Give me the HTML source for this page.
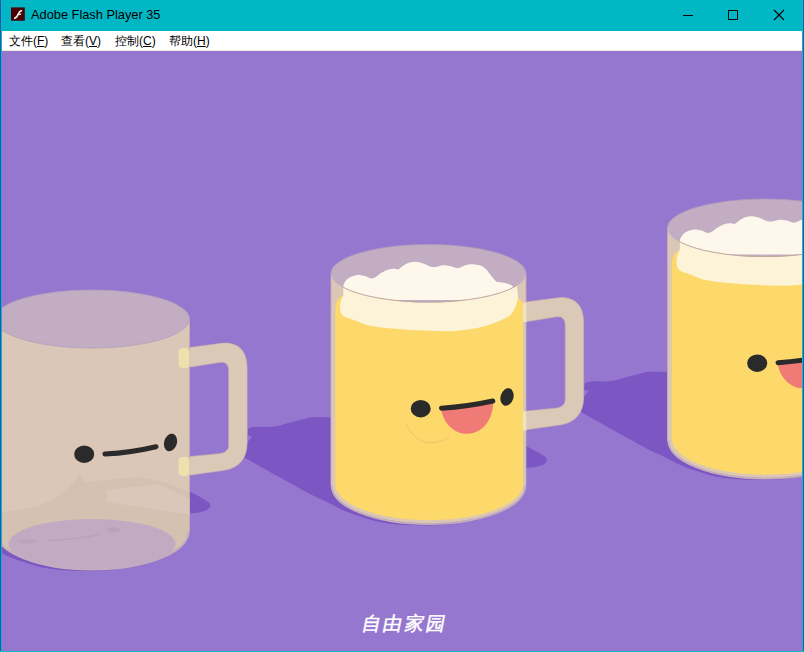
<!DOCTYPE html>
<html><head><meta charset="utf-8">
<style>
html,body{margin:0;padding:0;width:804px;height:652px;overflow:hidden;background:#0a6fb0;}
body{position:relative;font-family:"Liberation Sans",sans-serif;}
#title{position:absolute;left:0;top:0;width:804px;height:31px;background:#01b7c6;}
#ttext{position:absolute;left:31px;top:8px;font-size:12.8px;color:#000;white-space:nowrap;line-height:14px;}
#menu{position:absolute;left:2px;top:31px;width:800px;height:19px;background:#fff;}
#sep{position:absolute;left:2px;top:50px;width:800px;height:1px;background:#ebe8e4;}
.mi{position:absolute;top:3px;margin-left:-1px;font-size:12px;line-height:14px;color:#000;white-space:nowrap;}
.mi u{text-decoration:underline;}
#stage{position:absolute;left:0;top:0;}
#lb{position:absolute;left:0;top:0;width:1px;height:652px;background:#1f55b0;}
#lb2{position:absolute;left:1px;top:0;width:1px;height:652px;background:#0fb6c8;}
#rb{position:absolute;left:802px;top:0;width:1px;height:652px;background:#0fb6c8;}
#rb2{position:absolute;left:803px;top:0;width:1px;height:652px;background:#1d5da8;}
#bb{position:absolute;left:0;top:651px;width:804px;height:1px;background:#14b8c6;}
#cap{position:absolute;left:360px;top:612px;font-size:19px;line-height:24px;color:#fff;white-space:nowrap;letter-spacing:2.3px;transform:skewX(-11deg);transform-origin:0 100%;-webkit-text-stroke:0.5px #fff;}
</style></head>
<body>
<div id="title">
  <svg style="position:absolute;left:11px;top:7px" width="14" height="14" viewBox="0 0 14 14">
    <rect x="0" y="0.4" width="13.8" height="13.3" fill="#4a0204"/>
    <path d="M3.6,11.2 C5.6,10.8 6.4,9.2 7.3,7.1 C8.2,4.9 8.7,3.9 10.5,3.8" stroke="#fff" stroke-width="1.5" fill="none" stroke-linecap="round"/>
    <path d="M7.4,7.4 L9.6,7.1" stroke="#fff" stroke-width="1.4" fill="none" stroke-linecap="round"/>
  </svg>
  <div id="ttext">Adobe Flash Player 35</div>
  <svg style="position:absolute;left:670px;top:0" width="134" height="31" viewBox="0 0 134 31">
    <rect x="13" y="15" width="10" height="1" fill="#000"/>
    <rect x="58.5" y="10.5" width="9" height="9" fill="none" stroke="#000" stroke-width="1"/>
    <path d="M104,10 L114,20 M114,10 L104,20" stroke="#000" stroke-width="1.1" fill="none"/>
  </svg>
</div>
<div id="menu">
  <div class="mi" style="left:8px">文件(<u>F</u>)</div>
  <div class="mi" style="left:60px">查看(<u>V</u>)</div>
  <div class="mi" style="left:114px">控制(<u>C</u>)</div>
  <div class="mi" style="left:168px">帮助(<u>H</u>)</div>
</div>
<div id="sep"></div>

<svg id="stage" width="804" height="652" viewBox="0 0 804 652">
  <defs>
    <clipPath id="content"><rect x="2" y="51" width="800" height="600"/></clipPath>
    <clipPath id="topell"><ellipse cx="428.5" cy="273.5" rx="97.5" ry="29"/></clipPath>
    <!-- shadow cast upper-left + tip under handle -->
    <g id="shadow">
      <path d="M248.3,428.5 C252,427 256,426.6 260,426.7 C266,427 270,427 275,426.5 C282,425 286,423.5 292,422 C298,421 304,419 309,417.6 C315,417 322,417.2 330,417.5 L430,417 L430,525.5 L425.9,525.5 C422.5,525.4 412.3,525.5 405.5,525.1 C398.7,524.7 391.9,524.3 385.1,523.1 C378.3,521.9 371.5,519.9 364.7,517.9 C357.9,515.9 351.1,513.7 344.3,510.8 C337.5,507.9 330.7,504.0 323.9,500.6 C317.1,497.2 316.8,497.6 303.5,490.4 C290.2,483.2 253.9,462.8 244.0,457.3 L243,456 L247.4,442.3 L252,436.8 L247.4,435 Z" fill="#7c57c3"/>
      <path d="M331,484.2 A97.5,39.4 0 0 0 526,484.2 Z" fill="#7c57c3" transform="translate(-1.5,2)"/>
      <path d="M526,446 C534,450 542,454 546,457.5 C548,460 546,463 542.6,465 C537,467 531,467.8 526,467.8 Z" fill="#7c57c3"/>
    </g>
    <g id="handle">
      <path fill-rule="evenodd" fill="#dbc9b8" stroke="#c9b4ad" stroke-width="0.6" d="M524,302.3 L558,297.8 C574,296 583.6,305 583.6,322 L583.6,398 C583.6,412 576,422.5 561,424.8 L524,430 Z M524,322 L556.6,316.8 C562,316 565.2,319 565.2,325 L565.2,400 C565.2,404.5 562,407.4 555.4,408.2 L524,411.3 Z"/>
    </g>
    <g id="body">
      <path d="M331,273.3 L331,484.2 A97.5,39.4 0 0 0 526,484.2 L526,273.3 Z" fill="#dac7b7" stroke="#c5b0ab" stroke-width="0.8"/>
      <path d="M332,486 A96.5,38.2 0 0 0 525,486" fill="none" stroke="#c6afbd" stroke-width="1.8"/>
    </g>
    <g id="face">
      <ellipse cx="420.7" cy="408.7" rx="10" ry="8.7" fill="#2a2a2a"/>
      <ellipse cx="507" cy="397" rx="6.4" ry="9" fill="#2a2a2a" transform="rotate(16 507 397)"/>
    </g>
  </defs>

  <rect x="0" y="51" width="804" height="601" fill="#9677cf"/>

  <g clip-path="url(#content)">
    <!-- shadows -->
    <use href="#shadow" transform="translate(-336.5,45.5)"/>
    <use href="#shadow"/>
    <use href="#shadow" transform="translate(336.5,-45.5)"/>

    <!-- LEFT MUG (empty) -->
    <g transform="translate(-336.5,45.5)">
      <use href="#handle"/>
      <use href="#body"/>
      <path d="M331,467 L336.5,466.5 C355,464.5 374,461.5 385,456 C398.7,449.1 408,441 416.1,428 L421.1,436.7 L475.8,431.2 C495,434 512,440 526,447 L526,484.2 A97.5,39.4 0 0 1 331,484.2 Z" fill="#c8b2a6" opacity="0.3"/>
      <path d="M443.5,444.2 L495.7,438.7 L526,454.1 L526,469 L475.8,461.5 L443.5,456.5 Z" fill="#e4d5c8" opacity="0.35"/>
      <ellipse cx="428.5" cy="498.5" rx="83.5" ry="25" fill="#c2aac3"/>
      <path d="M383.5,495.2 C400,494.5 420,492.5 435.9,488.8" stroke="#b59cb8" stroke-width="1.2" fill="none" opacity="0.7"/>
      <ellipse cx="450" cy="484.3" rx="6.5" ry="2.8" fill="#b89fbb" opacity="0.75"/>
      <ellipse cx="363.2" cy="495.8" rx="10" ry="2.4" fill="#b89fbb" opacity="0.6"/>
      <rect x="515" y="302.5" width="11" height="20" rx="4" fill="#efe0b0"/>
      <rect x="515" y="411.5" width="11" height="19" rx="4" fill="#efe0b0"/>
      <ellipse cx="428.5" cy="273.5" rx="97.5" ry="29" fill="#c2adc3" stroke="#b59ebb" stroke-width="0.8"/>
      <use href="#face"/>
      <path d="M441.5,408.6 Q468,407 492.5,401.2" stroke="#2a2a2a" stroke-width="5" fill="none" stroke-linecap="round"/>
    </g>

    <!-- MIDDLE + RIGHT MUG (beer) -->
    <g id="beermug">
      <use href="#handle"/>
      <use href="#body"/>
      <rect x="522.5" y="302.5" width="4" height="19.5" fill="#f1e2c2"/>
      <rect x="522.5" y="411.5" width="4" height="19" fill="#f1e2c2"/>
      <!-- beer -->
      <path d="M335.3,484.2 L335.3,310 C335.3,302 338.5,296 344.5,295.7 L514,297 C519,297.5 523,300 523,306 L523,484.2 A93.85,36 0 0 1 335.3,484.2 Z" fill="#fdd86a"/>
      <!-- foam front -->
      <path d="M343.5,282 L343.3,295 C342.8,296.2 341.0,300.0 340.5,302.5 C340.0,305.0 339.8,307.8 340.3,310.0 C340.8,312.2 341.1,314.4 343.3,316.0 C345.5,317.6 349.2,318.3 353.3,319.8 C357.4,321.3 361.5,323.7 368.0,325.2 C374.5,326.7 384.0,327.8 392.2,328.6 C400.4,329.5 409.9,329.9 417.0,330.3 C424.1,330.7 428.3,330.9 434.5,331.0 C440.7,331.1 447.8,331.4 454.4,331.0 C461.0,330.6 468.4,329.7 474.3,328.6 C480.2,327.5 484.8,326.1 490.0,324.4 C495.2,322.7 501.6,320.2 505.3,318.3 C509.0,316.4 510.4,315.2 512.2,313.0 C514.0,310.8 515.0,307.8 516.0,305.3 C517.0,302.8 517.8,300.4 518.0,298.0 C518.2,295.6 517.6,292.2 517.5,291.0 L516.5,282 Z" fill="#fdf3d9"/>
      <!-- top ellipse -->
      <ellipse cx="428.5" cy="273.5" rx="97.5" ry="29" fill="#c2adc3"/>
      <path d="M331,273.3 A97.5,28.8 0 0 1 526,273.3" fill="none" stroke="#b39bb9" stroke-width="0.8"/>
      <!-- foam top -->
      <path clip-path="url(#topell)" d="M343.1,287.3 C343.3,286.6 343.4,284.6 344.3,283.0 C345.2,281.4 346.9,279.2 348.7,278.0 C350.5,276.8 353.0,276.0 354.9,275.5 C356.8,275.0 358.2,274.8 359.9,274.9 C361.6,275.0 363.0,275.5 364.9,276.1 C366.8,276.7 369.1,278.3 371.0,278.4 C372.9,278.5 374.3,277.6 376.0,276.7 C377.7,275.8 379.1,274.1 381.0,273.0 C382.9,271.9 385.1,270.6 387.2,269.9 C389.3,269.2 391.6,268.8 393.5,268.7 C395.4,268.6 396.8,269.8 398.4,269.3 C400.0,268.8 401.5,266.6 403.4,265.5 C405.3,264.4 407.5,263.0 409.6,262.4 C411.7,261.8 413.7,261.7 415.8,261.8 C417.9,261.9 419.7,262.3 422.0,263.0 C424.3,263.7 427.3,265.5 429.5,266.2 C431.7,266.9 433.5,267.1 435.4,267.0 C437.3,266.9 438.9,266.0 440.7,265.7 C442.4,265.4 444.2,265.3 445.9,265.4 C447.6,265.5 449.2,265.8 451.1,266.3 C453.1,266.8 455.6,268.3 457.6,268.3 C459.6,268.3 461.1,266.9 462.9,266.3 C464.6,265.7 466.2,264.9 468.1,264.6 C470.1,264.3 472.4,264.2 474.6,264.4 C476.8,264.6 479.2,264.8 481.2,265.7 C483.2,266.6 484.9,268.1 486.4,269.6 C487.9,271.1 488.8,273.0 490.3,274.8 C491.8,276.6 494.2,279.5 495.5,280.7 C496.8,281.9 496.8,281.7 498.1,282.0 C499.4,282.3 501.4,282.3 503.4,282.7 C505.4,283.1 508.0,283.7 509.9,284.6 C511.8,285.5 513.7,287.3 514.5,287.9 L522,300 L335,300 Z" fill="#fef8ec"/>
      <!-- rim line -->
      <path d="M342,286.6 A97.5,28.8 0 0 0 516,286" fill="none" stroke="#c2a99c" stroke-width="1"/>
      <use href="#face"/>
      <path d="M441.5,409 C442,420 452,434 467,433.8 C484,433.5 493,418 493.3,402 Z" fill="#ef7a76"/>
      <path d="M441.5,408.2 Q468,406.5 492.8,401" stroke="#2a2a2a" stroke-width="5" fill="none" stroke-linecap="round"/>
    </g>
    <use href="#beermug" transform="translate(336.5,-45.5)"/>
      <path d="M406,423.3 Q414,442 429.9,442.7 Q442,442.5 449.3,436.7" stroke="#dd6f6a" stroke-width="0.8" fill="none" opacity="0.5" stroke-dasharray="1.2 0.8"/>
  </g>
</svg>

<div id="lb"></div><div id="lb2"></div><div id="rb"></div><div id="rb2"></div><div id="bb"></div>
<div id="cap">自由家园</div>
</body></html>
